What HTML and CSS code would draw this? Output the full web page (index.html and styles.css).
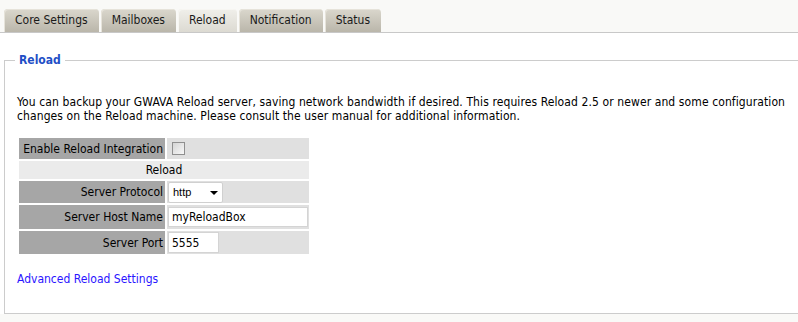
FILE: index.html
```html
<!DOCTYPE html>
<html>
<head>
<meta charset="utf-8">
<link rel="stylesheet" href="styles.css">
</head>
<body>
<div class="tabbar">
  <div class="tab">Core Settings</div>
  <div class="tab">Mailboxes</div>
  <div class="tab active">Reload</div>
  <div class="tab">Notification</div>
  <div class="tab">Status</div>
</div>
<div class="content">
  <fieldset class="panel">
    <legend class="panel-title">Reload</legend>
    <p class="intro">You can backup your GWAVA Reload server, saving network bandwidth if desired. This requires Reload 2.5 or newer and some configuration changes on the Reload machine. Please consult the user manual for additional information.</p>
    <div class="form-grid">
      <div class="label row1">Enable Reload Integration</div>
      <div class="value row1"><span class="checkbox"></span></div>
      <div class="section row2">Reload</div>
      <div class="label row3">Server Protocol</div>
      <div class="value row3"><div class="select"><span class="select-text">http</span><span class="select-arrow"></span></div></div>
      <div class="label row4">Server Host Name</div>
      <div class="value row4"><input class="text-input host" type="text" value="myReloadBox"></div>
      <div class="label row5">Server Port</div>
      <div class="value row5"><input class="text-input port" type="text" value="5555"></div>
    </div>
    <a class="adv-link" href="#">Advanced Reload Settings</a>
  </fieldset>
</div>
</body>
</html>
```
FILE: styles.css
```css
html, body {
  margin: 0;
  padding: 0;
  background: #f9f9f7;
  font-family: "DejaVu Sans Condensed", "DejaVu Sans", sans-serif;
  font-size: 12px;
  color: #000;
}
.tabbar {
  display: flex;
  gap: 2px;
  padding: 9px 0 0 4px;
  border-bottom: 1px solid #c8c8c8;
  height: 23px;
}
.tab {
  height: 23px;
  line-height: 23px;
  padding: 0 11px;
  border-radius: 4px 4px 0 0;
  background: linear-gradient(#dad7cd, #bab6aa);
  color: #1a1a1a;
  box-shadow: inset 1px 1px 0 #e6e3da;
}
.tab.active {
  background: linear-gradient(#f0efea, #dcdad2);
  box-shadow: inset 1px 1px 0 #f7f6f2;
}
.content {
  background: #fff;
  padding: 20px 0 0 4px;
}
.panel {
  margin: 0 -10px 0 0;
  padding: 0 0 27px 12px;
  border: 1px solid #cccccc;
  min-width: 0;
}
.panel-title {
  margin-left: -2px;
  padding: 0 4px;
  font-weight: bold;
  color: #1f4fc6;
  line-height: 15px;
}
.intro {
  margin: 27px 0 15px 0;
  line-height: 14px;
  letter-spacing: 0.1px;
}
.form-grid {
  display: grid;
  grid-template-columns: 146px 142px;
  grid-template-rows: 21px 18px 22px 24px 23px;
  gap: 2px;
  margin-left: 2px;
  width: 290px;
}
.label {
  background: #a6a6a6;
  text-align: right;
  padding-right: 2px;
  display: flex;
  align-items: center;
  justify-content: flex-end;
}
.value {
  background: #e0e0e0;
  display: flex;
  align-items: center;
}
.section {
  grid-column: 1 / 3;
  background: #ebebeb;
  text-align: center;
  line-height: 18px;
}
.checkbox {
  display: block;
  width: 11px;
  height: 11px;
  margin-left: 5px;
  border: 1px solid #8f8f8f;
  background: linear-gradient(135deg, #d4d4d4, #f8f8f8);
}
.select {
  position: relative;
  width: 53px;
  height: 19px;
  margin-left: 1px;
  border: 1px solid #d0d0d0;
  border-radius: 2px;
  background: #fff;
}
.select-text {
  font-family: "Liberation Sans", sans-serif;
  font-size: 11px;
  line-height: 19px;
  padding-left: 4px;
}
.select-arrow {
  position: absolute;
  right: 4px;
  top: 8px;
  border-left: 4px solid transparent;
  border-right: 4px solid transparent;
  border-top: 4px solid #000;
}
.text-input {
  box-sizing: border-box;
  height: 20px;
  margin: 0 0 0 1px;
  padding: 0 3px;
  border: 1px solid #d4d4d4;
  font-family: inherit;
  font-size: 12px;
  color: #000;
  background: #fff;
  outline: none;
}
.host { width: 140px; }
.port { width: 51px; height: 21px; }
.adv-link {
  display: block;
  margin: 18px 0 0 0;
  line-height: 14px;
  color: #2a14ff;
  text-decoration: none;
}
```
